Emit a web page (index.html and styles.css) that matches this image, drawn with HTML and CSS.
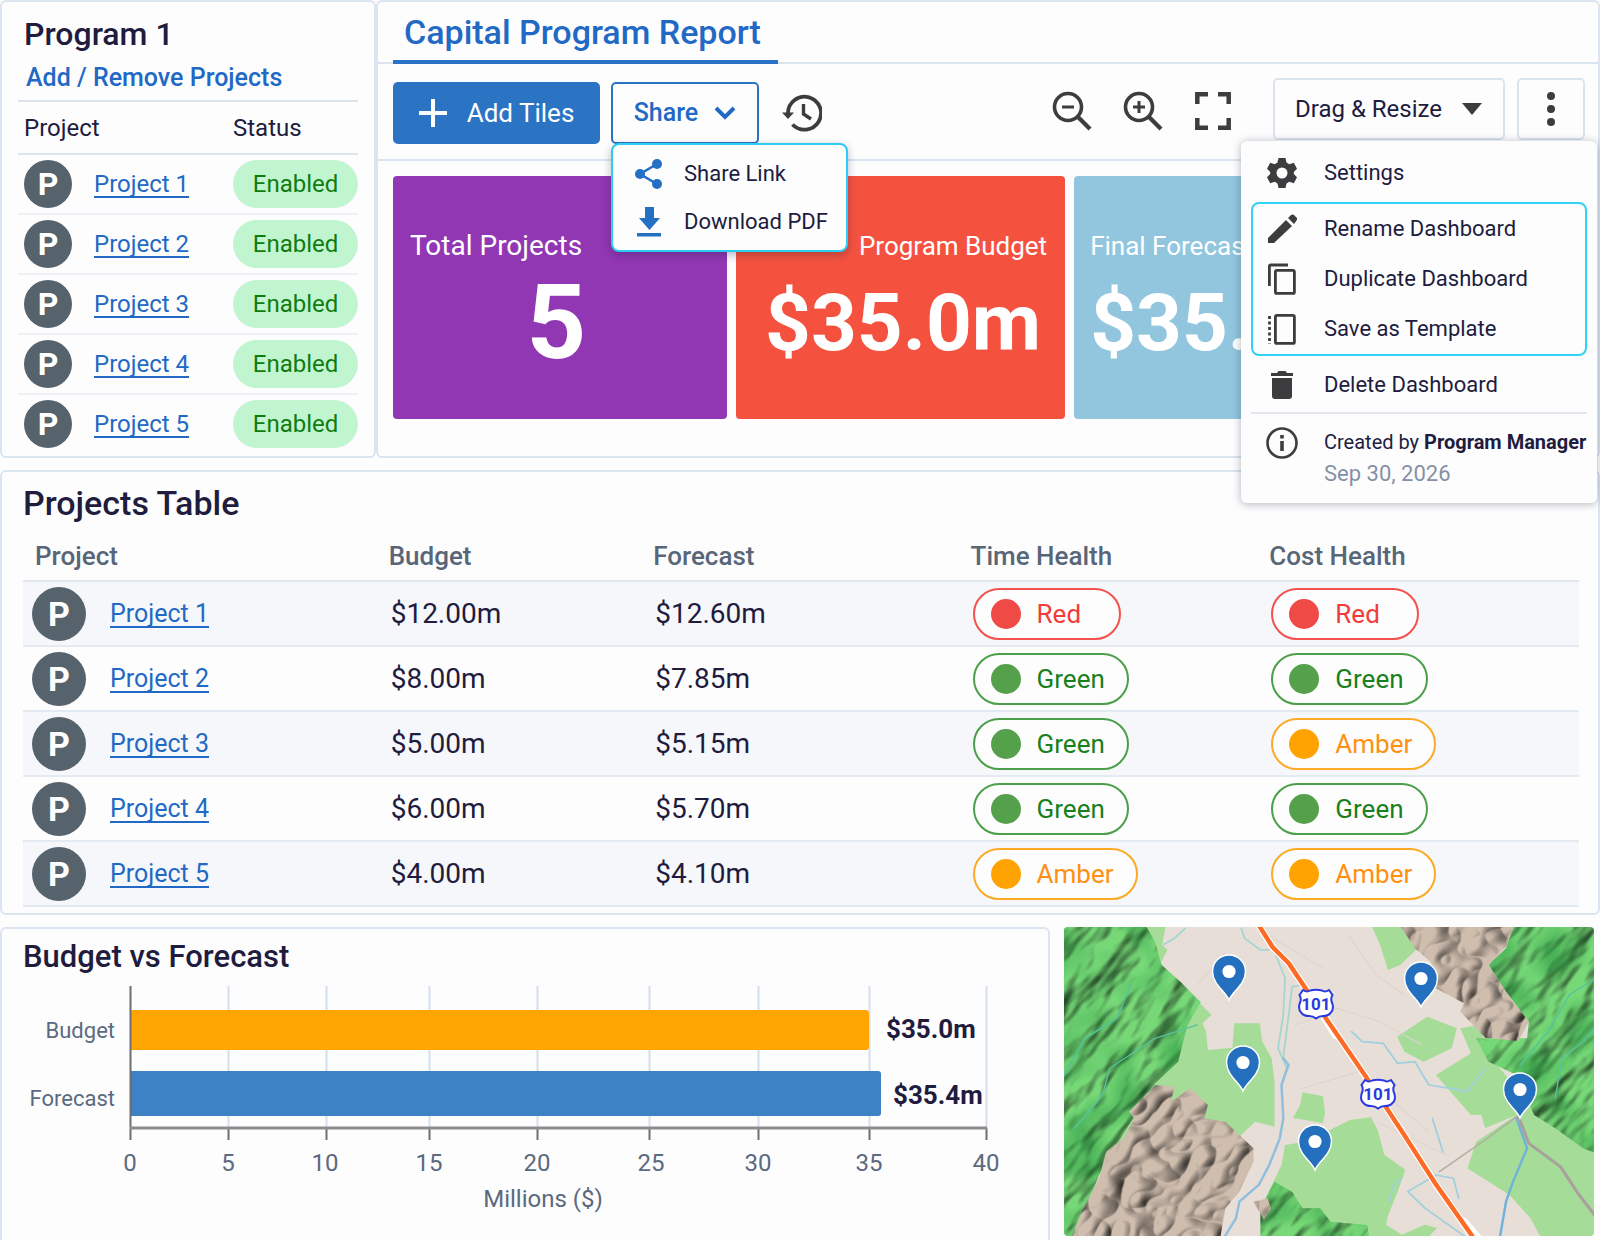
FILE: index.html
```html
<!DOCTYPE html>
<html lang="en">
<head>
<meta charset="utf-8">
<meta name="viewport" content="width=device-width, initial-scale=1">
<title>Capital Program Report</title>
<link rel="stylesheet" href="styles.css">
</head>
<body>
<div class="page">
  <div class="top">
    <aside class="panel sidebar">
      <h1 class="title">Program 1</h1>
      <a class="manage" href="#">Add / Remove Projects</a>
      <table class="status-table">
        <thead><tr><th scope="col">Project</th><th scope="col">Status</th></tr></thead>
        <tbody>
          <tr><td><div class="project"><span class="avatar">P</span><a href="#">Project 1</a></div></td><td><span class="enabled">Enabled</span></td></tr>
          <tr><td><div class="project"><span class="avatar">P</span><a href="#">Project 2</a></div></td><td><span class="enabled">Enabled</span></td></tr>
          <tr><td><div class="project"><span class="avatar">P</span><a href="#">Project 3</a></div></td><td><span class="enabled">Enabled</span></td></tr>
          <tr><td><div class="project"><span class="avatar">P</span><a href="#">Project 4</a></div></td><td><span class="enabled">Enabled</span></td></tr>
          <tr><td><div class="project"><span class="avatar">P</span><a href="#">Project 5</a></div></td><td><span class="enabled">Enabled</span></td></tr>
        </tbody>
      </table>
    </aside>

    <main class="panel report">
      <nav class="tabs"><a class="tab" href="#">Capital Program Report</a></nav>
      <div class="toolbar">
        <div class="tools-left">
          <button class="btn btn-primary" type="button">
            <svg width="28" height="28" viewBox="0 0 28 28"><path d="M14 0v28M0 14h28" stroke="currentColor" stroke-width="4"/></svg>
            Add Tiles
          </button>
          <div class="share">
            <button class="btn btn-share" type="button">
              Share
              <svg width="22" height="14" viewBox="0 0 22 14"><path d="M2 2l9 9 9-9" fill="none" stroke="currentColor" stroke-width="4"/></svg>
            </button>
            <div class="share-menu">
              <button class="menu-item" type="button">
                <svg width="28" height="30" viewBox="0 0 28 30"><path d="M22 5L5 15l17 10" fill="none" stroke="currentColor" stroke-width="2.6"/><circle cx="22" cy="5" r="5" fill="currentColor"/><circle cx="5" cy="15" r="5" fill="currentColor"/><circle cx="22" cy="25" r="5" fill="currentColor"/></svg>
                Share Link
              </button>
              <button class="menu-item" type="button">
                <svg width="28" height="30" viewBox="0 0 28 30"><path d="M10 0h9v11h6L14.500 23 4 11h6zM2 26h24v3.500H2z" fill="currentColor"/></svg>
                Download PDF
              </button>
            </div>
          </div>
          <button class="icon-btn" type="button" aria-label="History">
            <svg width="40" height="38" viewBox="0 0 40 38"><path d="M6 19A16.500 16.500 0 1 1 10.500 30.500" fill="none" stroke="currentColor" stroke-width="3.800"/><path d="M0 18.500h12L6 25z" fill="currentColor"/><path d="M21.500 10v10l7.500 5" fill="none" stroke="currentColor" stroke-width="3.400"/></svg>
          </button>
        </div>
        <div class="tools-right">
          <button class="icon-btn" type="button" aria-label="Zoom out">
            <svg width="40" height="40" viewBox="0 0 40 40" fill="none" stroke="currentColor"><circle cx="16" cy="16" r="13.500" stroke-width="3.600"/><path d="M26 26l12 12" stroke-width="4.200"/><path d="M10 16h12" stroke-width="3"/></svg>
          </button>
          <button class="icon-btn" type="button" aria-label="Zoom in">
            <svg width="40" height="40" viewBox="0 0 40 40" fill="none" stroke="currentColor"><circle cx="16" cy="16" r="13.500" stroke-width="3.600"/><path d="M26 26l12 12" stroke-width="4.200"/><path d="M10 16h12M16 10v12" stroke-width="3"/></svg>
          </button>
          <button class="icon-btn" type="button" aria-label="Full screen">
            <svg width="38" height="40" viewBox="0 0 38 40" fill="none" stroke="currentColor" stroke-width="4.500"><path d="M3.300 13V3.300H14M24 3.300h10.700V13M34.700 27v9.700H24M14 36.700H3.300V27"/></svg>
          </button>
          <div class="mode">
            <select class="mode-select" aria-label="Layout mode"><option>Drag &amp; Resize</option></select>
            <svg class="mode-caret" width="20" height="12" viewBox="0 0 20 12"><path d="M0 0h20L10 12z" fill="currentColor"/></svg>
          </div>
          <div class="more">
            <button class="btn btn-more" type="button" aria-label="More actions">
              <svg width="8" height="34" viewBox="0 0 8 34" fill="currentColor"><circle cx="4" cy="4" r="4"/><circle cx="4" cy="17" r="4"/><circle cx="4" cy="30" r="4"/></svg>
            </button>
            <div class="more-menu">
              <button class="menu-item" type="button">
                <svg width="30" height="32" viewBox="0 0 30 32"><path fill="currentColor" fill-rule="evenodd" d="M11.500 1h7l1 4.600 2.800 1.600 4.500-1.400L30 11.800 26.800 15v2l3.200 3.200-3.200 6-4.500-1.400-2.800 1.600-1 4.600h-7l-1-4.600-2.800-1.600-4.500 1.400-3.200-6L3.200 17v-2L0 11.800l3.200-6 4.500 1.400 2.800-1.600zM15 10.500a5.500 5.500 0 1 0 0 11 5.500 5.500 0 1 0 0-11z"/></svg>
                Settings
              </button>
              <div class="menu-group">
                <button class="menu-item" type="button">
                  <svg width="30" height="32" viewBox="0 0 30 32"><path fill="currentColor" d="M1 25L19 7l6 6L7 30H1zM21 5l3-3q1.500-1 3 0l2.500 2.500q1.500 1.500 0 3L27 11z"/></svg>
                  Rename Dashboard
                </button>
                <button class="menu-item" type="button">
                  <svg width="30" height="32" viewBox="0 0 30 32" fill="none" stroke="currentColor" stroke-width="2.800"><path d="M2.400 23V3.500q0-1.500 1.500-1.500H21"/><rect x="8.400" y="7.400" width="19" height="23" rx="1.500"/></svg>
                  Duplicate Dashboard
                </button>
                <button class="menu-item" type="button">
                  <svg width="30" height="32" viewBox="0 0 30 32" fill="none" stroke="currentColor" stroke-width="2.800"><rect x="8.400" y="2.400" width="19" height="28" rx="1.500"/><path d="M2.500 3v28" stroke-dasharray="3 2.500"/></svg>
                  Save as Template
                </button>
              </div>
              <button class="menu-item" type="button">
                <svg width="30" height="32" viewBox="0 0 30 32"><path fill="currentColor" d="M4 4h6l1.500-2h7L20 4h6v3H4zM5 9h20v18q0 3-3 3H8q-3 0-3-3z"/></svg>
                Delete Dashboard
              </button>
              <div class="menu-info">
                <svg width="32" height="34" viewBox="0 0 32 34"><circle cx="16" cy="17" r="14.500" fill="none" stroke="currentColor" stroke-width="2.600"/><path d="M14.200 9h3.600v3.600h-3.600zM14.200 15h3.600v10h-3.600z" fill="currentColor"/></svg>
                <div>
                  <div>Created by <b>Program Manager</b></div>
                  <time class="date" datetime="2026-09-30">Sep 30, 2026</time>
                </div>
              </div>
            </div>
          </div>
        </div>
      </div>
      <div class="tiles">
        <section class="tile tile-count"><h3>Total Projects</h3><p>5</p></section>
        <section class="tile tile-budget"><h3>Program Budget</h3><p>$35.0m</p></section>
        <section class="tile tile-forecast"><h3>Final Forecast</h3><p>$35.4m</p></section>
      </div>
    </main>
  </div>

  <section class="panel projects">
    <h2 class="title">Projects Table</h2>
    <table class="projects-table">
      <colgroup><col class="c-project"><col class="c-budget"><col class="c-forecast"><col class="c-time"><col></colgroup>
      <thead><tr><th scope="col">Project</th><th scope="col">Budget</th><th scope="col">Forecast</th><th scope="col">Time Health</th><th scope="col">Cost Health</th></tr></thead>
      <tbody>
        <tr><td><div class="project"><span class="avatar">P</span><a href="#">Project 1</a></div></td><td>$12.00m</td><td>$12.60m</td><td><span class="health red">Red</span></td><td><span class="health red">Red</span></td></tr>
        <tr><td><div class="project"><span class="avatar">P</span><a href="#">Project 2</a></div></td><td>$8.00m</td><td>$7.85m</td><td><span class="health green">Green</span></td><td><span class="health green">Green</span></td></tr>
        <tr><td><div class="project"><span class="avatar">P</span><a href="#">Project 3</a></div></td><td>$5.00m</td><td>$5.15m</td><td><span class="health green">Green</span></td><td><span class="health amber">Amber</span></td></tr>
        <tr><td><div class="project"><span class="avatar">P</span><a href="#">Project 4</a></div></td><td>$6.00m</td><td>$5.70m</td><td><span class="health green">Green</span></td><td><span class="health green">Green</span></td></tr>
        <tr><td><div class="project"><span class="avatar">P</span><a href="#">Project 5</a></div></td><td>$4.00m</td><td>$4.10m</td><td><span class="health amber">Amber</span></td><td><span class="health amber">Amber</span></td></tr>
      </tbody>
    </table>
  </section>

  <div class="bottom">
    <section class="panel chart">
      <h2 class="title">Budget vs Forecast</h2>
      <svg class="plot" viewBox="0 0 1046 261" role="img" aria-label="Budget 35.0 million dollars, forecast 35.4 million dollars">
        <path class="grid" d="M226.500 9v142M324.500 9v142M427.500 9v142M535.500 9v142M647.500 9v142M756.500 9v142M867.500 9v142M984.500 9v142"/>
        <path fill="#ffa602" d="M128 33h736q3 0 3 3v34q0 3-3 3H128z"/>
        <path fill="#3c82c4" d="M128 94h748q3 0 3 3v39q0 3-3 3H128z"/>
        <path class="axis" d="M128.500 9v154M226.500 151v12M324.500 151v12M427.500 151v12M535.500 151v12M647.500 151v12M756.500 151v12M867.500 151v12M984.500 151v12"/>
        <path class="base" d="M128 151h857"/>
        <g class="series"><text x="113" y="61">Budget</text><text x="113" y="129">Forecast</text></g>
        <g class="values"><text x="884" y="61">$35.0m</text><text x="891" y="127">$35.4m</text></g>
        <g class="ticks">
          <text x="128" y="194">0</text><text x="226" y="194">5</text><text x="323" y="194">10</text><text x="427" y="194">15</text><text x="535" y="194">20</text><text x="649" y="194">25</text><text x="756" y="194">30</text><text x="867" y="194">35</text><text x="984" y="194">40</text>
          <text x="541" y="230">Millions ($)</text>
        </g>
      </svg>
    </section>

    <svg class="map" viewBox="0 0 530 309" preserveAspectRatio="xMidYMid slice" role="img" aria-label="Map of project sites">
      <defs>
        <filter id="hills" x="0" y="0" width="100%" height="100%" color-interpolation-filters="sRGB">
          <feTurbulence type="fractalNoise" baseFrequency="0.016 0.036" numOctaves="3" seed="8"/>
          <feGaussianBlur stdDeviation="0.700"/>
          <feDiffuseLighting surfaceScale="8" diffuseConstant="1.120" lighting-color="#fff" result="light"><feDistantLight azimuth="250" elevation="56"/></feDiffuseLighting>
          <feBlend in="SourceGraphic" in2="light" mode="multiply"/>
        </filter>
        <filter id="crags" x="0" y="0" width="100%" height="100%" color-interpolation-filters="sRGB">
          <feTurbulence type="turbulence" baseFrequency="0.022 0.030" numOctaves="2" seed="3"/>
          <feGaussianBlur stdDeviation="0.600"/>
          <feDiffuseLighting surfaceScale="8" diffuseConstant="1.150" lighting-color="#fff" result="light"><feDistantLight azimuth="230" elevation="56"/></feDiffuseLighting>
          <feBlend in="SourceGraphic" in2="light" mode="multiply"/>
        </filter>
        <filter id="patches" x="0" y="0" width="100%" height="100%" color-interpolation-filters="sRGB">
          <feTurbulence type="fractalNoise" baseFrequency="0.020" numOctaves="2" seed="21"/>
          <feColorMatrix values="0 0 0 0 .12  0 0 0 0 .55  0 0 0 0 .22  3 0 0 0 -1.300"/>
        </filter>
        <clipPath id="forest" transform="translate(-14 -12) scale(.3508 .3333)">
          <path d="M30 30H272L300 80 318 150 372 200 430 262 392 330 365 440 300 505 210 655 140 780 70 970H30z"/>
          <path d="M1320 30H1570V720L1520 700 1440 640 1380 600 1330 480 1250 440 1215 370 1360 370 1365 320 1300 230 1250 150 1300 100z"/>
          <path d="M600 970V880L640 800 690 830 720 880 770 880 800 920 905 930 910 970zM360 600l40-30 35 20-10 40-70 0z"/>
        </clipPath>
        <clipPath id="rocks" transform="translate(-14 -12) scale(.3508 .3333)">
          <path d="M300 510l55 5-10 45 55-40 50 50-10 40 60 10 80 80v40l-40 90-40 50-15 90H60l30-80 50-100 20-80 50-40 30-60-15-20z"/>
          <path d="M1000 35H1322L1300 95 1250 150 1300 230 1365 320 1335 378 1240 368 1170 290 1180 265 1100 220 1085 140 1040 100z"/>
          <path d="M580 860l40-10 10 30-20 35z"/>
        </clipPath>
        <g id="pin">
          <path d="M0 0C-3-8-16.500-16-16.500-28.500a16.500 16.500 0 0 1 33 0C16.500-16 3-8 0 0z" fill="#2470bf" stroke="#fff" stroke-width="1.500"/>
          <circle cy="-28.500" r="6.600" fill="#fff"/>
        </g>
        <path id="shield" d="M-13-14q4 2.500 7 .5 6-1.500 12 0 3 2 7-.5l3.500 5q-2.500 4 0 9 1.500 6-2 9-2.500 3-7.500 3-4 0-7 2.500-3-2.500-7-2.500-5 0-7.500-3-3.500-3-2-9 2.500-5 0-9z" fill="#fff" stroke="#2a3ae0" stroke-width="2"/>
      </defs>
      <rect width="530" height="309" fill="#e6ded7"/>
      <g transform="translate(-14 -12) scale(.3508 .3333)">
        <g fill="#a5dc98">
          <path d="M30 30H330L320 90 335 105 315 145 460 300 435 325 445 350 450 405 520 398 525 325 598 325 605 380 632 430 640 500V635L585 620 530 675 480 640 300 620 200 700H30z"/>
          <path d="M720 532l58 12 6 50-6 30-85-15 20-40zM855 615l60-8 20 40 18 72 60 45-20 60-30 80-5 25 45 30 65-30 35 10-45 50H600V880l60-130 10-60 60-10z"/>
          <path d="M918 35h90l35 70-45 45-35 15-20-70zM1075 305l85 35-15 60-80 40-55-30-20-45z"/>
          <path d="M1170 340l50-10 40 100 130 170 180 110V970H1400L1370 910 1310 840 1190 760 1215 680 1330 600 1240 640 1230 600 1200 600 1100 480 1200 415z"/>
        </g>
        <path d="M620 60l160 100M850 60l80 120 80 60M700 330l120-50 120 40 120 70M720 520l160-50 200 180M500 110l-80 100M930 620l200 100" fill="none" stroke="#ddd4cd" stroke-width="3"/>
      </g>
      <g clip-path="url(#forest)">
        <g transform="rotate(-48 265 155)"><rect x="-150" y="-250" width="830" height="810" fill="#76d877" filter="url(#hills)"/></g>
        <rect width="530" height="309" opacity=".5" filter="url(#patches)"/>
      </g>
      <g clip-path="url(#rocks)"><g transform="rotate(-40 265 155)"><rect x="-150" y="-250" width="830" height="810" fill="#cfbdae" filter="url(#crags)"/></g></g>
      <g transform="translate(-14 -12) scale(.3508 .3333)" fill="none" stroke-linecap="round" stroke-linejoin="round">
        <path d="M40 480l60-110 90-60 40-100M70 640l80-100 20-80 130-90 120-40M1570 180l-90 60-60 110-80 100M1570 320l-50 60-60 50-20 120" stroke="#55c2a0" stroke-width="4"/>
        <path d="M385 40l-30 30-30 18M545 40l10 30 45 35 25 0M640 110l30 80-5 110-15 100 25 60-15 50M720 210l-30 5-10 90-15 120" stroke="#a3d6d2" stroke-width="5"/>
        <path d="M665 430l15 20-20 60 5 100-10 60-30 80-30 60-55 50-10 50-35 60" stroke="#8fbfdd" stroke-width="7"/>
        <path d="M860 350l30 30 60 5 40 60 50-5 40 70 60 10 50 10 50-70M1090 610l30 100M1165 850l-15-60-50-10-80 50 50 50 40 30 80 60M970 860l5-40 25-30" stroke="#9fd0de" stroke-width="5"/>
        <path d="M1330 610l30 90-40 100-20 60-18 110" stroke="#6fb3da" stroke-width="7"/>
        <path d="M1330 605l-90 70-130 95" stroke="#b3aaa3" stroke-width="4"/>
        <path d="M1335 605l30 80 90 70 50 80 65 90" stroke="#a8a19c" stroke-width="9"/>
        <path d="M785 310l30 50M1180 920l40 50" stroke="#fff" stroke-width="24"/>
        <path d="M590 22l45 75 45 47 70 110 150 230 105 168 95 156 120 180" stroke="#fff" stroke-width="20"/>
        <path d="M590 22l45 75 45 47 70 110 150 230 105 168 95 156 120 180" stroke="#ff6a24" stroke-width="13"/>
      </g>
      <use href="#shield" x="252" y="77"/><use href="#shield" x="314" y="167"/>
      <g class="route"><text x="252" y="83">101</text><text x="314" y="173">101</text></g>
      <use href="#pin" x="165" y="73"/><use href="#pin" x="357" y="80"/><use href="#pin" x="179" y="164"/><use href="#pin" x="456" y="191"/><use href="#pin" x="251" y="243"/>
    </svg>
  </div>
</div>
</body>
</html>
```
FILE: styles.css
```css
* { box-sizing: border-box; }

body {
  margin: 0;
  background: #fdfdfe;
  color: #211c3e;
  font: 24px/32px Roboto, "Liberation Sans", sans-serif;
}

h1, h2, h3, p { margin: 0; }
a { color: #2169c4; }
svg { display: block; flex: none; }

button, select {
  margin: 0;
  padding: 0;
  border: 0;
  background: none;
  color: inherit;
  font: inherit;
  cursor: pointer;
}

table { border-collapse: separate; border-spacing: 0; }
th, td { padding: 0; text-align: left; vertical-align: middle; }

.page {
  display: flex;
  flex-direction: column;
  gap: 12px;
  min-height: 100vh;
}

.panel {
  border: 2px solid #dbe5f0;
  border-radius: 6px;
  background: #fdfdfe;
}

.title { font-size: 32px; line-height: 40px; font-weight: 500; }

.top { display: grid; grid-template-columns: 376px minmax(0, 1fr); }

/* Program sidebar */
.sidebar { padding: 12px 16px 1px; }
.sidebar .title { margin: 0 0 8px 6px; }

.manage {
  display: block;
  margin: 0 0 6px 8px;
  font-size: 25px;
  font-weight: 500;
  text-decoration: none;
}

.status-table { width: 100%; border-top: 2px solid #dbe3ec; }
.status-table th { height: 53px; border-bottom: 2px solid #dbe3ec; font-weight: 400; }
.status-table th:first-child { padding-left: 6px; }
.status-table td { height: 60px; border-bottom: 2px solid #eef2f6; }
.status-table tr:last-child td { border-bottom-color: transparent; }
.status-table td:last-child, .status-table th:last-child { width: 125px; }
.status-table td:first-child { padding-left: 6px; }

.project { display: flex; align-items: center; gap: 22px; }
.project a { text-decoration-thickness: 2px; text-underline-offset: 4px; text-decoration-skip-ink: none; }

.avatar {
  display: flex;
  align-items: center;
  justify-content: center;
  width: 48px;
  height: 48px;
  border-radius: 50%;
  background: #56626c;
  color: #fff;
  font-size: 32px;
  font-weight: 700;
}

.enabled {
  display: block;
  height: 48px;
  border-radius: 24px;
  background: #c0f5d0;
  color: #107c10;
  line-height: 48px;
  text-align: center;
}

/* Report header */
.tabs { display: flex; padding-left: 15px; border-bottom: 2px solid #dbe5f0; }

.tab {
  margin-bottom: -2px;
  padding: 10px 17px 7px 11px;
  border-bottom: 4px solid #2a72c6;
  font-size: 34px;
  line-height: 41px;
  font-weight: 500;
  text-decoration: none;
}

.toolbar {
  display: flex;
  justify-content: space-between;
  padding: 14px 13px 15px 15px;
  border-bottom: 2px solid #dbe5f0;
}

.tools-left { display: flex; padding-top: 4px; }
.tools-right { display: flex; }

.btn {
  display: flex;
  align-items: center;
  justify-content: center;
  height: 62px;
  border-radius: 5px;
}

.btn-primary { gap: 20px; width: 207px; margin-right: 11px; background: #2b74c4; color: #fff; font-size: 26px; }
.btn-share { gap: 16px; width: 148px; border: 2px solid #2b74c4; color: #2169c4; font-size: 25px; font-weight: 500; }
.icon-btn { display: flex; align-items: center; color: #3d3d3f; }
.tools-left .icon-btn { margin-left: 23px; }
.tools-right .icon-btn { margin-right: 31px; }

.share { position: relative; }

.share-menu {
  position: absolute;
  z-index: 2;
  top: 61px;
  left: 0;
  width: 237px;
  padding: 5px 0 4px;
  border: 2px solid #2ccdf2;
  border-radius: 8px;
  background: #fdfdfe;
  box-shadow: 0 3px 8px rgba(20, 30, 60, .3);
}

.menu-item { display: flex; align-items: center; width: 100%; height: 50px; text-align: left; }
.share-menu .menu-item { gap: 21px; height: 48px; padding-left: 22px; font-size: 22px; }
.share-menu svg { color: #2470c4; }

.mode { position: relative; margin: 0 12px 0 10px; }

.mode-select {
  width: 232px;
  height: 62px;
  padding: 0 20px;
  border: 2px solid #dbe3ee;
  border-radius: 5px;
  font-size: 24px;
  appearance: none;
}

.mode-caret { position: absolute; top: 25px; right: 23px; color: #3d3d3f; pointer-events: none; }

.more { position: relative; }
.btn-more { width: 68px; border: 2px solid #dbe3ee; color: #3d3d3f; }

.more-menu {
  position: absolute;
  z-index: 2;
  top: 63px;
  right: -12px;
  width: 356px;
  padding: 7px 10px 13px;
  border-radius: 6px;
  background: #fdfdfe;
  box-shadow: 0 1px 8px rgba(30, 40, 60, .35);
  font-size: 22px;
}

.more-menu .menu-item { gap: 27px; padding-left: 16px; }
.more-menu svg { color: #3d3d3f; }

.menu-group { margin: 4px 0; border: 2px solid #30d2f5; border-radius: 8px; }
.menu-group .menu-item { padding-left: 14px; }

.menu-info {
  display: flex;
  align-items: flex-start;
  gap: 26px;
  margin-top: 2px;
  padding: 12px 0 0 15px;
  border-top: 2px solid #e3e6ec;
  font-size: 20px;
  white-space: nowrap;
}

.menu-info b { font-weight: 700; }
.date { color: #8690a5; font-size: 22px; }

/* Number tiles */
.tiles {
  display: grid;
  grid-template-columns: 333fr 329fr 510fr;
  gap: 9px;
  padding: 15px 13px 37px 15px;
}

.tile { height: 243px; padding-top: 51px; overflow: hidden; border-radius: 4px; color: #fff; }
.tile h3 { font-size: 26px; line-height: 38px; font-weight: 400; }
.tile p { font-size: 80px; line-height: 116px; font-weight: 700; }
.tile-count { padding-left: 17px; padding-right: 24px; background: #9137b3; }
.tile-count h3 { font-size: 28px; }
.tile-count p { font-size: 104px; text-align: center; }
.tile-budget { padding-right: 18px; background: #f4523f; text-align: right; }
.tile-budget p { padding-right: 6px; }
.tile-forecast { padding-left: 16px; background: #92c5de; }

/* Projects table */
.projects { padding: 11px 19px 6px 21px; }
.projects .title { font-size: 34px; }
.projects-table { width: 100%; margin-top: 8px; table-layout: fixed; font-size: 28px; }
.c-project { width: 23.5%; }
.c-budget { width: 17%; }
.c-forecast { width: 20.4%; }
.c-time { width: 19.2%; }
.projects-table th { height: 51px; border-bottom: 2px solid #e0e7ef; color: #586678; font-size: 26px; font-weight: 500; }
.projects-table th:first-child { padding-left: 12px; }
.projects-table td { height: 65px; padding-left: 2px; border-bottom: 2px solid #e3eaf2; }
.projects-table td:first-child { padding-left: 9px; }
.projects-table tr:nth-child(odd) td { background: #f5f7fa; }
.projects-table .project { gap: 24px; font-size: 25px; }
.projects-table .avatar { width: 54px; height: 54px; font-size: 34px; }

.health {
  display: inline-flex;
  align-items: center;
  gap: 16px;
  min-width: 148px;
  height: 52px;
  padding: 0 22px 0 16px;
  border: 2px solid;
  border-radius: 26px;
  background: #fdfdfe;
  font-size: 26px;
  vertical-align: middle;
}

.health::before { content: ""; width: 30px; height: 30px; border-radius: 50%; background: var(--dot); }
.red { --dot: #ef4a45; border-color: #f4514c; color: #f23c3a; }
.green { --dot: #55a04a; border-color: #4a9f48; color: #18801c; }
.amber { --dot: #ffa303; border-color: #fbaa26; color: #ff9010; }

/* Chart and map */
.bottom {
  display: grid;
  flex: 1;
  grid-template-columns: minmax(0, 105fr) minmax(0, 53fr);
  gap: 14px;
  padding-right: 6px;
}

.chart { padding-top: 8px; border-bottom: 0; border-radius: 6px 6px 0 0; }
.chart .title { padding-left: 21px; font-size: 31px; }
.plot { width: 100%; height: auto; }
.grid { stroke: #d5e0ed; stroke-width: 2; }
.axis { stroke: #6e6e70; stroke-width: 2; }
.base { stroke: #8c8c8e; stroke-width: 3; }
.series, .ticks { fill: #5b6a80; }
.series { font-size: 22px; text-anchor: end; }
.ticks { font-size: 24px; text-anchor: middle; }
.values { fill: #211c3e; font-size: 26px; font-weight: 700; }

.map { width: 100%; height: auto; border-radius: 4px; }
.route { fill: #2a3ae0; font-size: 17px; font-weight: 700; text-anchor: middle; }
```
